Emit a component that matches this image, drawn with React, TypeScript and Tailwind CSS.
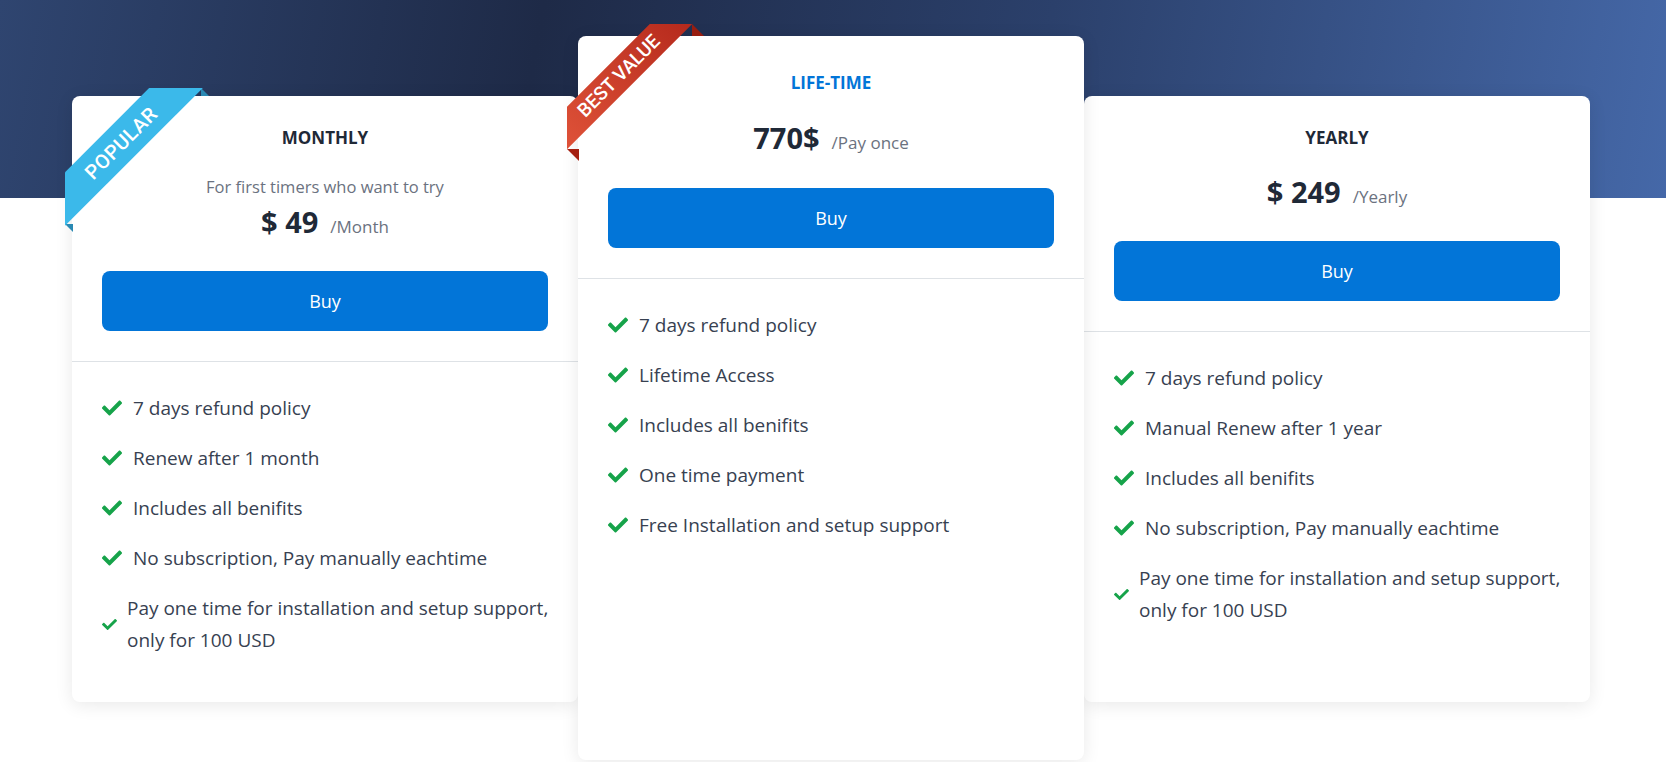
import { FaCheck } from "react-icons/fa"

interface Plan {
  name: string
  subtitle?: string
  price: string
  period: string
  features: string[]
  note?: [string, string]
}

const monthly: Plan = {
  name: "Monthly",
  subtitle: "For first timers who want to try",
  price: "$ 49",
  period: "/Month",
  features: ["7 days refund policy", "Renew after 1 month", "Includes all benifits", "No subscription, Pay manually eachtime"],
  note: ["Pay one time for installation and setup support,", "only for 100 USD"],
}

const lifetime: Plan = {
  name: "Life-time",
  price: "770$",
  period: "/Pay once",
  features: [
    "7 days refund policy",
    "Lifetime Access",
    "Includes all benifits",
    "One time payment",
    "Free Installation and setup support",
  ],
}

const yearly: Plan = {
  name: "Yearly",
  price: "$ 249",
  period: "/Yearly",
  features: [
    "7 days refund policy",
    "Manual Renew after 1 year",
    "Includes all benifits",
    "No subscription, Pay manually eachtime",
  ],
  note: ["Pay one time for installation and setup support,", "only for 100 USD"],
}

function PopularRibbon() {
  return (
    <div className="absolute -left-[7px] -top-[8px] w-[144px] h-[144px] overflow-hidden z-10 pointer-events-none">
      <div className="absolute right-0 top-0 border-[4px] border-t-transparent border-r-transparent border-b-[#2a89b3] border-l-[#2a89b3]" />
      <div className="absolute left-0 bottom-0 border-[4px] border-b-transparent border-l-transparent border-t-[#2a89b3] border-r-[#2a89b3]" />
      <div className="absolute left-[-54px] top-[36px] w-[220px] h-[38px] -rotate-45 bg-[#3bb9ea] flex items-center justify-center text-white text-[20px] font-medium tracking-[0.5px] font-['Roboto',sans-serif]">
        POPULAR
      </div>
    </div>
  )
}

function BestValueRibbon() {
  return (
    <div className="absolute -left-[11px] -top-[12px] w-[137px] h-[137px] overflow-hidden z-10 pointer-events-none">
      <div className="absolute right-0 top-0 border-[6px] border-t-transparent border-r-transparent border-b-[#981d10] border-l-[#981d10]" />
      <div className="absolute left-0 bottom-0 border-[6px] border-b-transparent border-l-transparent border-t-[#a51f10] border-r-[#a51f10]" />
      <div className="absolute left-[-48px] top-[37px] w-[200px] h-[30px] -rotate-45 bg-gradient-to-r from-[#e1543a] to-[#b3261a] flex items-center justify-center text-white text-[19px] font-medium font-['Roboto',sans-serif]">
        BEST VALUE
      </div>
    </div>
  )
}

function Feature({ children, small }: { children: React.ReactNode; small?: boolean }) {
  return (
    <li className={`flex items-center mb-[18px] ${small ? "gap-[10px]" : "gap-[11px]"}`}>
      <FaCheck size={small ? 15 : 20} className="shrink-0 text-[#16a34a]" />
      <span>{children}</span>
    </li>
  )
}

function PlanCard({
  plan,
  featured,
  ribbon,
  className,
}: {
  plan: Plan
  featured?: boolean
  ribbon?: React.ReactNode
  className: string
}) {
  return (
    <div className={`relative w-[506px] bg-white rounded-lg shadow-[0_3px_18px_rgba(0,0,0,0.09)] ${className}`}>
      {ribbon}
      <div className={`px-[30px] pb-[30px] border-b border-[#dee2e6] text-center ${featured ? "pt-[35px]" : "pt-[30px]"}`}>
        <h3
          className={`text-[17px] leading-6 font-bold uppercase ${featured ? "text-[#0275d8]" : "text-[#1f2937]"}`}
        >
          {plan.name}
        </h3>
        {plan.subtitle && <p className="mt-[25px] text-[16.5px] leading-6 text-[#6b7280]">{plan.subtitle}</p>}
        <div
          className={`flex items-baseline justify-center h-10 ${
            plan.subtitle ? "mt-[3px]" : featured ? "mt-[23px]" : "mt-[22px]"
          }`}
        >
          <span className="text-[29px] leading-10 font-bold text-[#1f2937]">{plan.price}</span>
          <span className="ml-[12px] text-[17px] text-[#6b7280]">{plan.period}</span>
        </div>
        <button
          className={`w-full h-[60px] rounded-lg bg-[#0275d8] text-white text-[18px] ${
            plan.subtitle ? "mt-[29px]" : featured ? "mt-[30px]" : "mt-[29px]"
          }`}
        >
          Buy
        </button>
      </div>
      <ul className="px-[30px] pt-[30px] text-[19px] leading-8 text-[#374151]">
        {plan.features.map((f) => (
          <Feature key={f}>{f}</Feature>
        ))}
        {plan.note && (
          <Feature small>
            <span className="whitespace-nowrap">{plan.note[0]}</span>
            <br />
            {plan.note[1]}
          </Feature>
        )}
      </ul>
    </div>
  )
}

export default function App() {
  return (
    <div className="min-h-screen bg-white font-['Open_Sans',sans-serif] overflow-hidden">
      <div className="h-[198px] bg-[linear-gradient(100deg,#2f4570_0%,#1e2a47_32%,#2b406b_62%,#4568a8_100%)]" />
      <div className="flex items-start pl-[72px] -mt-[102px]">
        <PlanCard plan={monthly} ribbon={<PopularRibbon />} className="h-[606px]" />
        <PlanCard plan={lifetime} featured ribbon={<BestValueRibbon />} className="h-[724px] -mt-[60px] z-20" />
        <PlanCard plan={yearly} className="h-[606px]" />
      </div>
    </div>
  )
}
